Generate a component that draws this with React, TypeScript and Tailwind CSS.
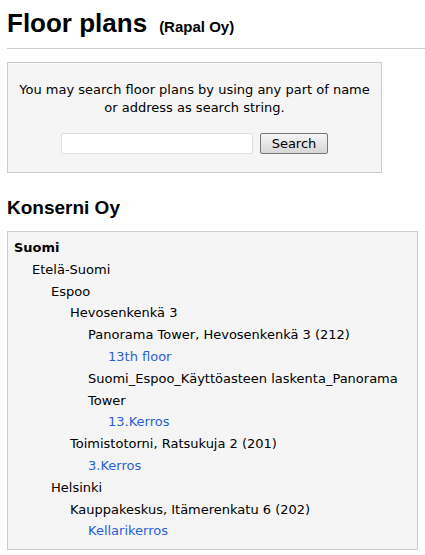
export default function App() {
  const rows: { text: string; level: number; link?: boolean; bold?: boolean }[] = [
    { text: 'Suomi', level: 0, bold: true },
    { text: 'Etelä-Suomi', level: 1 },
    { text: 'Espoo', level: 2 },
    { text: 'Hevosenkenkä 3', level: 3 },
    { text: 'Panorama Tower, Hevosenkenkä 3 (212)', level: 4 },
    { text: '13th floor', level: 5, link: true },
    { text: 'Suomi_Espoo_Käyttöasteen laskenta_Panorama Tower', level: 4 },
    { text: '13.Kerros', level: 5, link: true },
    { text: 'Toimistotorni, Ratsukuja 2 (201)', level: 3 },
    { text: '3.Kerros', level: 4, link: true },
    { text: 'Helsinki', level: 2 },
    { text: 'Kauppakeskus, Itämerenkatu 6 (202)', level: 3 },
    { text: 'Kellarikerros', level: 4, link: true },
  ];

  const indent = ['pl-0', 'pl-[18px]', 'pl-[37px]', 'pl-[56px]', 'pl-[74px]', 'pl-[94px]'];

  return (
    <div className="bg-white min-h-screen text-black font-['DejaVu_Sans',sans-serif] text-[13px] overflow-hidden">
      <div className="pl-[7px]">
        <h1 className="h-[48px] pt-[6px] text-[26px] font-bold leading-[34px] font-['Liberation_Sans',Arial,sans-serif]">
          Floor plans
          <span className="ml-[12px] text-[15px] leading-none">(Rapal Oy)</span>
        </h1>
        <div className="border-t border-[#cccccc]" />

        <div className="mt-[13px] w-[375px] border border-[#cccccc] bg-[#f5f5f5] pt-[18px] pb-[18px] px-[8px] text-center">
          <p className="leading-[18px]">
            You may search floor plans by using any part of name or address as search string.
          </p>
          <div className="mt-[16px] flex justify-center items-center gap-[7px]">
            <input
              type="text"
              className="w-[192px] h-[21px] bg-white border border-[#d8e0e8] rounded-[2px] outline-none"
            />
            <button className="w-[68px] h-[21px] border border-[#777] rounded-[2px] bg-gradient-to-b from-[#f6f6f6] to-[#d6d6d6] text-[13px] leading-[18px]">
              Search
            </button>
          </div>
        </div>

        <h2 className="mt-[22px] text-[19px] font-bold leading-[26px] font-['Liberation_Sans',Arial,sans-serif]">
          Konserni Oy
        </h2>

        <div className="mt-[10px] mr-[7px] border border-[#cccccc] bg-[#f5f5f5] pt-[5px] pb-[7px] pl-[6px] pr-[6px]">
          {rows.map((r, i) => (
            <div
              key={i}
              className={`${indent[r.level]} leading-[21.8px] ${r.bold ? 'font-bold' : ''} ${r.link ? 'text-[#2b5fd6]' : ''}`}
            >
              {r.text}
            </div>
          ))}
        </div>
      </div>
    </div>
  );
}
